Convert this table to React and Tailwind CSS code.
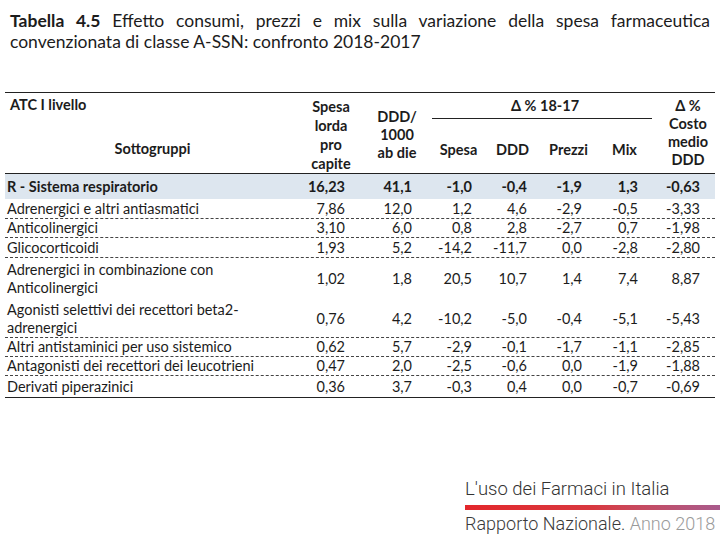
import React from "react";

const font = { fontFamily: "Lato, 'Open Sans', sans-serif" };

const rows = [
  { label: ["Adrenergici e altri antiasmatici"], v: ["7,86", "12,0", "1,2", "4,6", "-2,9", "-0,5", "-3,33"], h: "h-[20px]", line: true },
  { label: ["Anticolinergici"], v: ["3,10", "6,0", "0,8", "2,8", "-2,7", "0,7", "-1,98"], h: "h-[19px]", line: true },
  { label: ["Glicocorticoidi"], v: ["1,93", "5,2", "-14,2", "-11,7", "0,0", "-2,8", "-2,80"], h: "h-[20px]", line: true },
  { label: ["Adrenergici in combinazione con", "Anticolinergici"], v: ["1,02", "1,8", "20,5", "10,7", "1,4", "7,4", "8,87"], h: "h-[42px]", line: false },
  { label: ["Agonisti selettivi dei recettori beta2-", "adrenergici"], v: ["0,76", "4,2", "-10,2", "-5,0", "-0,4", "-5,1", "-5,43"], h: "h-[38px]", line: true },
  { label: ["Altri antistaminici per uso sistemico"], v: ["0,62", "5,7", "-2,9", "-0,1", "-1,7", "-1,1", "-2,85"], h: "h-[19px]", line: true },
  { label: ["Antagonisti dei recettori dei leucotrieni"], v: ["0,47", "2,0", "-2,5", "-0,6", "0,0", "-1,9", "-1,88"], h: "h-[19px]", line: true },
  { label: ["Derivati piperazinici"], v: ["0,36", "3,7", "-0,3", "0,4", "0,0", "-0,7", "-0,69"], h: "h-[21px]", line: false },
];

const cols = [
  "w-[62px] pr-[17px]",
  "w-[70px] pr-[20px]",
  "w-[53px] pr-[13px]",
  "w-[55px] pr-[13px]",
  "w-[57px] pr-[15px]",
  "w-[55px] pr-[14px]",
  "w-[63px] pr-[15px]",
];

function Row({ label, v, h, line, bold, bg }) {
  return (
    <div
      className={`flex items-center ${h} ${line ? "border-b border-dashed border-[#444]" : ""} ${bold ? "font-bold" : ""} ${bg || ""}`}
    >
      <div className="w-[295px] pl-[2px] leading-[18px]">
        {label.map((l) => (
          <div key={l}>{l}</div>
        ))}
      </div>
      {v.map((x, i) => (
        <div key={i} className={`${cols[i]} text-right`}>
          {x}
        </div>
      ))}
    </div>
  );
}

export default function App() {
  return (
    <div className="w-[720px] h-[540px] bg-white flex flex-col text-[#1c1c1c]" style={font}>
      <div className="px-[10px] pt-[10px] text-[17.5px] leading-[21px]">
        <div className="[text-align-last:justify] text-justify">
          <span className="font-bold">Tabella 4.5</span> Effetto consumi, prezzi e mix sulla variazione della spesa farmaceutica
        </div>
        <div>convenzionata di classe A-SSN: confronto 2018-2017</div>
      </div>

      <div className="mx-[5px] mt-[40px] w-[710px] text-[14.5px]">
        <div className="flex h-[82px] border-y border-[#222] font-bold">
          <div className="w-[295px] flex flex-col pt-[2px] leading-[19px]">
            <div className="pl-[5px]">ATC I livello</div>
            <div className="mt-[25px] text-center">Sottogruppi</div>
          </div>
          <div className="w-[62px] flex flex-col justify-center text-center leading-[19px] pt-[3px]">
            <div>Spesa</div>
            <div>lorda</div>
            <div>pro</div>
            <div>capite</div>
          </div>
          <div className="w-[70px] flex flex-col justify-center text-center leading-[18px] pt-[4px]">
            <div>DDD/</div>
            <div>1000</div>
            <div>ab die</div>
          </div>
          <div className="w-[220px] flex flex-col">
            <div className="pt-[3px] pb-[3px] leading-[19px] text-center pl-[6px] border-b border-[#222]">
              Δ % 18-17
            </div>
            <div className="flex-1 flex items-end pb-[14px] leading-[19px]">
              <div className="w-[53px] text-center">Spesa</div>
              <div className="w-[55px] text-center">DDD</div>
              <div className="w-[57px] text-center">Prezzi</div>
              <div className="w-[55px] text-center">Mix</div>
            </div>
          </div>
          <div className="w-[63px] flex flex-col justify-center text-center leading-[18px] pl-[9px]">
            <div>Δ %</div>
            <div>Costo</div>
            <div>medio</div>
            <div>DDD</div>
          </div>
        </div>

        <Row
          label={["R - Sistema respiratorio"]}
          v={["16,23", "41,1", "-1,0", "-0,4", "-1,9", "1,3", "-0,63"]}
          h="h-[25px]"
          bold
          bg="bg-[#dde6ef]"
        />
        {rows.map((r) => (
          <Row key={r.label[0]} {...r} />
        ))}
        <div className="border-b border-[#222]" />
      </div>

      <div className="mt-auto pl-[465px] pb-[4px]" style={{ fontFamily: "Roboto, Lato, sans-serif" }}>
        <div className="text-[18.5px] font-light text-[#333] leading-[22px]">L'uso dei Farmaci in Italia</div>
        <div className="h-[5px] mt-[5px] bg-gradient-to-r from-[#e3262b] via-[#d8383f] to-[#a85a8c]" />
        <div className="text-[18px] font-light leading-[24px] mt-[2px]">
          <span className="text-[#3a3a3a]">Rapporto Nazionale.</span>{" "}
          <span className="text-[#9a9a9a]">Anno 2018</span>
        </div>
      </div>
    </div>
  );
}
